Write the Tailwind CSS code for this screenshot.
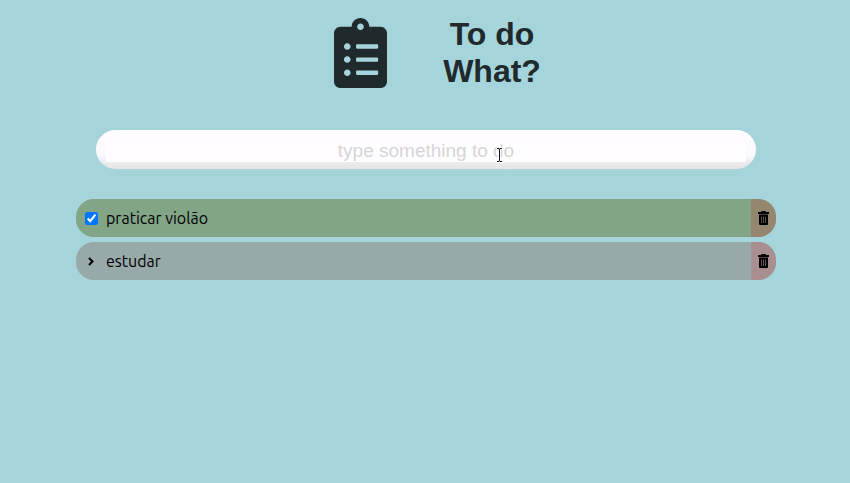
<!DOCTYPE html>
<html lang="pt-BR">
<head>
<meta charset="utf-8">
<meta name="viewport" content="width=device-width, initial-scale=1">
<title>To do What?</title>
<script src="https://cdn.jsdelivr.net/npm/@tailwindcss/browser@4"></script>
</head>
<body class="min-h-screen bg-[#a5d4db] pl-0.5 font-['Ubuntu','Noto_Sans',sans-serif] text-black">
<header class="flex justify-center gap-14 pt-4 pl-[23px]">
  <svg class="mt-0.5 h-[70px] w-[53px] fill-[#20292b]" viewBox="0 0 384 512" preserveAspectRatio="none" aria-hidden="true"><path d="M336 64h-80c0-35.300-28.700-64-64-64s-64 28.700-64 64H48C21.500 64 0 85.500 0 112v352c0 26.500 21.500 48 48 48h288c26.500 0 48-21.500 48-48V112c0-26.500-21.500-48-48-48zM96 424c-13.300 0-24-10.700-24-24s10.700-24 24-24 24 10.700 24 24-10.700 24-24 24zm0-96c-13.300 0-24-10.700-24-24s10.700-24 24-24 24 10.700 24 24-10.700 24-24 24zm0-96c-13.300 0-24-10.700-24-24s10.700-24 24-24 24 10.700 24 24-10.700 24-24 24zm96-192c13.300 0 24 10.700 24 24s-10.700 24-24 24-24-10.700-24-24 10.700-24 24-24zm128 368c0 4.400-3.600 8-8 8H168c-4.400 0-8-3.600-8-8v-16c0-4.400 3.600-8 8-8h144c4.400 0 8 3.600 8 8v16zm0-96c0 4.400-3.600 8-8 8H168c-4.400 0-8-3.600-8-8v-16c0-4.400 3.600-8 8-8h144c4.400 0 8 3.600 8 8v16zm0-96c0 4.400-3.600 8-8 8H168c-4.400 0-8-3.600-8-8v-16c0-4.400 3.600-8 8-8h144c4.400 0 8 3.600 8 8v16z"/></svg>
  <h1 class="text-center font-['Liberation_Sans',Arial,sans-serif] text-[32px] leading-[37px] font-bold text-[#20292b]">To do<br>What?</h1>
</header>
<main class="mx-auto mt-10 max-w-[700px]">
  <form class="relative mx-5 rounded-full bg-linear-to-b from-[#fffdff] from-10% via-[#f9f8fb] via-65% to-[#e7e7e7] to-90% px-2.5 pt-2.5 pb-[7px]">
    <input type="text" aria-label="New task" placeholder="type something to do" class="block h-[22px] w-full bg-[#fffdff] text-center font-['Liberation_Sans',Arial,sans-serif] text-[19px] outline-none placeholder:text-[#d5d5d8]">
    <svg class="pointer-events-none absolute top-[17px] left-[400px] h-4 w-[7px]" viewBox="0 0 7 16" fill="none" aria-hidden="true"><path d="M0 0h7v3H5v10h2v3H0v-3h2V3H0z" fill="#fff" fill-opacity=".8"/><path d="M1 1.500h2l.5.5.5-.5h2M3.500 2v12M1 14.500h2l.5-.5.5.5h2" stroke="#111"/></svg>
  </form>
  <ul class="mt-[30px] flex flex-col gap-[5px]">
    <li class="flex h-[38px] overflow-hidden rounded-[18px] bg-[#82a487]">
      <label class="flex flex-1 items-center text-base">
        <span class="flex w-[30px] justify-center"><input type="checkbox" checked class="size-[13px]"></span>praticar violão
      </label>
      <button type="button" aria-label="Delete praticar violão" class="flex w-[25px] items-center justify-center bg-[#95866f]">
        <svg class="h-[14px] w-[11px]" viewBox="0 0 11 14" aria-hidden="true"><path fill-rule="evenodd" d="M3.500 0h4l.5 1h3v2H0V1h3zM1 3.500h9V13a1 1 0 0 1-1 1H2a1 1 0 0 1-1-1zM3 5.500V12h.6V5.500zm2.200 0V12h.6V5.500zm2.200 0V12H8V5.500z"/></svg>
      </button>
    </li>
    <li class="flex h-[38px] overflow-hidden rounded-[18px] bg-[#98a9aa]">
      <div class="flex flex-1 items-center text-base">
        <span class="flex w-[30px] justify-center"><svg class="h-[9px] w-[6px]" viewBox="0 0 6 9" fill="none" stroke="#000" stroke-width="2" aria-hidden="true"><path d="M1 1l3.500 3.500L1 8"/></svg></span>estudar
      </div>
      <button type="button" aria-label="Delete estudar" class="flex w-[25px] items-center justify-center bg-[#a98f91]">
        <svg class="h-[14px] w-[11px]" viewBox="0 0 11 14" aria-hidden="true"><path fill-rule="evenodd" d="M3.500 0h4l.5 1h3v2H0V1h3zM1 3.500h9V13a1 1 0 0 1-1 1H2a1 1 0 0 1-1-1zM3 5.500V12h.6V5.500zm2.200 0V12h.6V5.500zm2.200 0V12H8V5.500z"/></svg>
      </button>
    </li>
  </ul>
</main>
</body>
</html>
